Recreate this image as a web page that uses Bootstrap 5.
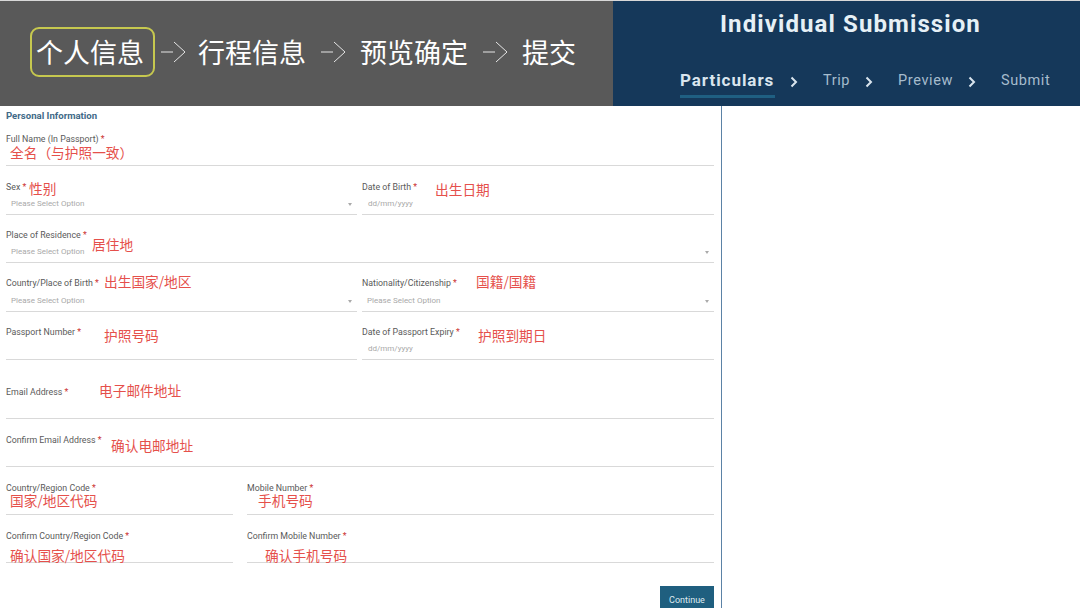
<!doctype html>
<html lang="zh">
<head>
<meta charset="utf-8">
<title>Individual Submission</title>
<link href="https://cdn.jsdelivr.net/npm/bootstrap@5.3.0/dist/css/bootstrap.min.css" rel="stylesheet">
<style>
html,body{height:608px;overflow:hidden;background:#fff}
body{font-family:Roboto,"Liberation Sans",sans-serif;color:#555}
.topbar{height:106px;border-top:1px solid #d8d8d8}
.cn-side{width:613px;background:#595959;color:#fff;padding:0 0 3px 30px;font-family:"Noto Sans CJK SC",sans-serif;font-size:27px;line-height:40px}
.cn-side>*{flex:none}
.cn-now{width:125px;height:50px;border:2px solid #c6c84f;border-radius:9px;padding-left:4px;margin-right:5px;white-space:nowrap}
.cn-step{white-space:nowrap}
.cn-arrow{width:26px;height:24px}
.gap-a{margin-right:12px}
.gap-b{margin-left:14px;margin-right:14px}
.en-side{width:467px;background:#15385a;color:#dbe6ee}
.en-title{font-size:24px;font-weight:700;letter-spacing:1.1px;line-height:28px;padding:9px 0 0 107px;color:#e6f0f6}
.en-steps{padding:32px 0 0 67px;font-size:14.5px;letter-spacing:.6px;line-height:20px;color:#a6bccd}
.en-now{font-size:17px;font-weight:700;color:#d9e5ee;letter-spacing:.95px;width:95px;height:28px;border-bottom:3px solid #1f5f82;white-space:nowrap}
.en-chev{width:8px;height:12px;flex:none;margin:6px 0 0 15px}
.step-txt{margin-left:25px;padding-top:1px}
.sheet{width:722px;height:502px;border-right:1px solid #5b82a6;padding:0 7px 0 6px}
.sheet-head{height:11px;font-size:9.6px;font-weight:700;color:#3f6a88;line-height:20px;white-space:nowrap}
.fld{height:48px;position:relative;border-bottom:1px solid #d9d9d9}
.fld-t{height:49px}
.fld-w{height:59px}
.fld-lab{font-size:8.8px;line-height:12px;height:12px;color:#5a5a5a;white-space:nowrap}
.fld-lab span{color:#c33}
.fld-body{height:21px;padding:0 5px 4px;font-size:8px;line-height:12px;color:#a9a9a9}
.fld-body.short{height:20px}
.fld-body.tall{height:22px}
.dt{padding-left:6px}
.caret{width:0;height:0;border-left:2.5px solid transparent;border-right:2.5px solid transparent;border-top:3px solid #aaa}
.two{display:grid;grid-template-columns:351px 352px;column-gap:5px}
.cd{display:grid;grid-template-columns:227px 467px;column-gap:14px}
.nt{position:absolute;color:#e5504b;font-family:"Noto Sans CJK SC",sans-serif;font-size:13.7px;line-height:12px;white-space:nowrap}
.n1{left:4px;bottom:7px}.n2{left:23px;bottom:20px}.n3{left:73px;bottom:19px}.n4{left:86px;bottom:12px}
.n5{left:98px;bottom:24px}.n6{left:114px;bottom:24px}.n7{left:98px;bottom:18px}.n8{left:116px;bottom:18px}
.n9{left:93px;bottom:22px}.n10{left:105px;bottom:15px}.n11{left:4px;bottom:8px}.n12{left:11px;bottom:8px}
.n13{left:4px;bottom:1px}.n14{left:18px;bottom:1px}
.go{background:#1f5f7f;color:#dfeaf0;border:0;border-radius:0;font-size:9px;line-height:12px;width:54px;height:22px;padding:6px 0 0;margin-top:23px}
</style>
</head>
<body>
<header class="topbar d-flex">
  <div class="cn-side d-flex align-items-center">
    <div class="cn-now d-flex align-items-center">个人信息</div>
    <svg class="cn-arrow gap-a" viewBox="0 0 26 24" fill="none" stroke="#e6e6e6" stroke-width="1"><path d="M1 12H13M14 2 25 12 14 22"/></svg>
    <div class="cn-step">行程信息</div>
    <svg class="cn-arrow gap-b" viewBox="0 0 26 24" fill="none" stroke="#e6e6e6" stroke-width="1"><path d="M1 12H13M14 2 25 12 14 22"/></svg>
    <div class="cn-step">预览确定</div>
    <svg class="cn-arrow gap-b" viewBox="0 0 26 24" fill="none" stroke="#e6e6e6" stroke-width="1"><path d="M1 12H13M14 2 25 12 14 22"/></svg>
    <div class="cn-step">提交</div>
  </div>
  <div class="en-side">
    <div class="en-title">Individual Submission</div>
    <nav class="en-steps d-flex align-items-start">
      <div class="en-now">Particulars</div>
      <svg class="en-chev" viewBox="0 0 8 12" fill="none" stroke="#d9e5ee" stroke-width="2"><path d="M1.5 1.5 6 6 1.5 10.5"/></svg>
      <div class="step-txt">Trip</div>
      <svg class="en-chev" viewBox="0 0 8 12" fill="none" stroke="#d9e5ee" stroke-width="2"><path d="M1.5 1.5 6 6 1.5 10.5"/></svg>
      <div class="step-txt">Preview</div>
      <svg class="en-chev" viewBox="0 0 8 12" fill="none" stroke="#d9e5ee" stroke-width="2"><path d="M1.5 1.5 6 6 1.5 10.5"/></svg>
      <div class="step-txt">Submit</div>
    </nav>
  </div>
</header>
<main class="sheet">
  <div class="sheet-head">Personal Information</div>
  <div class="fld fld-t d-flex flex-column justify-content-end"><div class="fld-lab">Full Name (In Passport) <span>*</span></div><div class="fld-body short"></div><div class="nt n1">全名（与护照一致）</div></div>
  <div class="two">
    <div class="fld fld-t d-flex flex-column justify-content-end"><div class="fld-lab">Sex <span>*</span></div><div class="fld-body d-flex justify-content-between align-items-end"><span>Please Select Option</span><i class="caret mb-1"></i></div><div class="nt n2">性别</div></div>
    <div class="fld fld-t d-flex flex-column justify-content-end"><div class="fld-lab">Date of Birth <span>*</span></div><div class="fld-body dt d-flex align-items-end">dd/mm/yyyy</div><div class="nt n3">出生日期</div></div>
  </div>
  <div class="fld d-flex flex-column justify-content-end"><div class="fld-lab">Place of Residence <span>*</span></div><div class="fld-body d-flex justify-content-between align-items-end"><span>Please Select Option</span><i class="caret mb-1"></i></div><div class="nt n4">居住地</div></div>
  <div class="two">
    <div class="fld fld-t d-flex flex-column justify-content-end"><div class="fld-lab">Country/Place of Birth <span>*</span></div><div class="fld-body tall d-flex justify-content-between align-items-end"><span>Please Select Option</span><i class="caret mb-1"></i></div><div class="nt n5">出生国家/地区</div></div>
    <div class="fld fld-t d-flex flex-column justify-content-end"><div class="fld-lab">Nationality/Citizenship <span>*</span></div><div class="fld-body tall d-flex justify-content-between align-items-end"><span>Please Select Option</span><i class="caret mb-1"></i></div><div class="nt n6">国籍/国籍</div></div>
  </div>
  <div class="two">
    <div class="fld d-flex flex-column justify-content-end"><div class="fld-lab">Passport Number <span>*</span></div><div class="fld-body"></div><div class="nt n7">护照号码</div></div>
    <div class="fld d-flex flex-column justify-content-end"><div class="fld-lab">Date of Passport Expiry <span>*</span></div><div class="fld-body dt d-flex align-items-end">dd/mm/yyyy</div><div class="nt n8">护照到期日</div></div>
  </div>
  <div class="fld fld-w d-flex flex-column justify-content-end"><div class="fld-lab">Email Address <span>*</span></div><div class="fld-body short"></div><div class="nt n9">电子邮件地址</div></div>
  <div class="fld d-flex flex-column justify-content-end"><div class="fld-lab">Confirm Email Address <span>*</span></div><div class="fld-body short"></div><div class="nt n10">确认电邮地址</div></div>
  <div class="cd">
    <div class="fld d-flex flex-column justify-content-end"><div class="fld-lab">Country/Region Code <span>*</span></div><div class="fld-body short"></div><div class="nt n11">国家/地区代码</div></div>
    <div class="fld d-flex flex-column justify-content-end"><div class="fld-lab">Mobile Number <span>*</span></div><div class="fld-body short"></div><div class="nt n12">手机号码</div></div>
  </div>
  <div class="cd">
    <div class="fld d-flex flex-column justify-content-end"><div class="fld-lab">Confirm Country/Region Code <span>*</span></div><div class="fld-body short"></div><div class="nt n13">确认国家/地区代码</div></div>
    <div class="fld d-flex flex-column justify-content-end"><div class="fld-lab">Confirm Mobile Number <span>*</span></div><div class="fld-body short"></div><div class="nt n14">确认手机号码</div></div>
  </div>
  <div class="d-flex justify-content-end"><button type="button" class="btn go">Continue</button></div>
</main>
</body>
</html>
